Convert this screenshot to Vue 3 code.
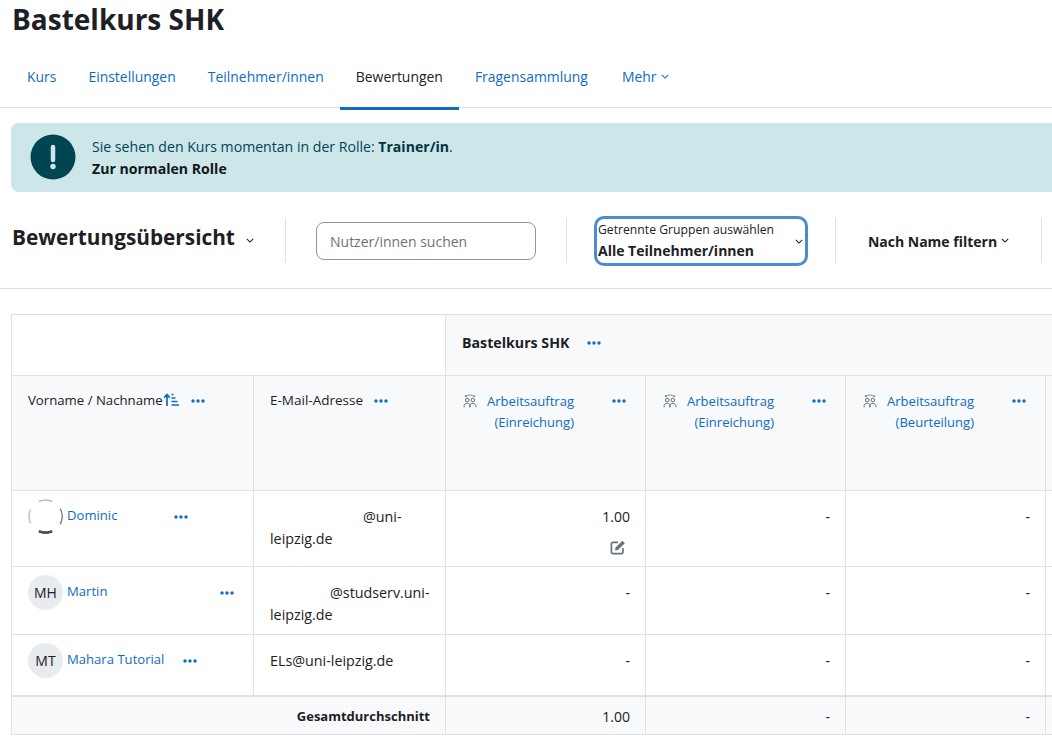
<template>
  <div class="page">
    <h1 class="course-title">Bastelkurs SHK</h1>

    <nav class="tabs">
      <a v-for="tab in tabs" :key="tab" class="tab" :class="{ active: tab === 'Bewertungen' }">{{ tab }}</a>
      <a class="tab more">Mehr <svg class="chev" viewBox="0 0 10 6"><path d="M1 1l4 4 4-4" /></svg></a>
    </nav>

    <div class="alert">
      <svg class="alert-icon" viewBox="0 0 46 46">
        <circle cx="23" cy="23" r="22.5" fill="#004552" />
        <path d="M23 13v13" stroke="#cce6ea" stroke-width="4.5" stroke-linecap="round" />
        <circle cx="23" cy="32.5" r="2.7" fill="#cce6ea" />
      </svg>
      <div class="alert-text">
        <div>Sie sehen den Kurs momentan in der Rolle: <strong>Trainer/in</strong>.</div>
        <a class="alert-link">Zur normalen Rolle</a>
      </div>
    </div>

    <div class="toolbar">
      <div class="tool tool-title">
        <span class="report-title">Bewertungsübersicht</span>
        <svg class="chev dark" viewBox="0 0 10 6"><path d="M1 1l4 4 4-4" /></svg>
      </div>
      <div class="tool tool-search">
        <input class="search" type="text" placeholder="Nutzer/innen suchen" />
      </div>
      <div class="tool tool-group">
        <div class="group-select">
          <div>
            <div class="group-label">Getrennte Gruppen auswählen</div>
            <div class="group-value">Alle Teilnehmer/innen</div>
          </div>
          <svg class="chev dark" viewBox="0 0 10 6"><path d="M1 1l4 4 4-4" /></svg>
        </div>
      </div>
      <div class="tool tool-filter">
        <span class="filter-label">Nach Name filtern</span>
        <svg class="chev dark" viewBox="0 0 10 6"><path d="M1 1l4 4 4-4" /></svg>
      </div>
    </div>

    <table class="grades">
      <colgroup>
        <col style="width: 242px" />
        <col style="width: 192px" />
        <col style="width: 200px" />
        <col style="width: 200px" />
        <col style="width: 200px" />
        <col style="width: 200px" />
      </colgroup>
      <thead>
        <tr class="row-course">
          <th class="blank" colspan="2"></th>
          <th class="course-cell" colspan="4">
            <span>Bastelkurs SHK</span>
            <svg class="dots" viewBox="0 0 14 4"><circle cx="2" cy="2" r="1.7" /><circle cx="7" cy="2" r="1.7" /><circle cx="12" cy="2" r="1.7" /></svg>
          </th>
        </tr>
        <tr class="row-items">
          <th>
            <div class="head-line">
              <span>Vorname / Nachname</span>
              <svg class="sort" viewBox="0 0 16 14">
                <path d="M4 13V2M1.2 4.6L4 1.6l2.8 3" fill="none" stroke="#0f6cbf" stroke-width="1.7" />
                <path d="M8.5 1.5h2M8.5 5h4M8.5 8.5h6M8.5 12h7.5" fill="none" stroke="#0f6cbf" stroke-width="1.5" />
              </svg>
              <svg class="dots first" viewBox="0 0 14 4"><circle cx="2" cy="2" r="1.7" /><circle cx="7" cy="2" r="1.7" /><circle cx="12" cy="2" r="1.7" /></svg>
            </div>
          </th>
          <th>
            <div class="head-line">
              <span class="mail-head">E-Mail-Adresse</span>
              <svg class="dots mail" viewBox="0 0 14 4"><circle cx="2" cy="2" r="1.7" /><circle cx="7" cy="2" r="1.7" /><circle cx="12" cy="2" r="1.7" /></svg>
            </div>
          </th>
          <th v-for="item in items" :key="item.id" class="item-cell">
            <div class="item-head">
              <svg class="group-icon" viewBox="0 0 14 14" fill="none" stroke="#6a737b" stroke-width="1">
                <circle cx="4.2" cy="6" r="1.8" />
                <circle cx="9.8" cy="6" r="1.8" />
                <path d="M1 13.2c0-2.6 1.2-4 3.2-4s3.2 1.4 3.2 4M6.6 13.2c0-2.6 1.2-4 3.2-4s3.2 1.4 3.2 4" />
                <path d="M2.5 2.4C4 .6 10 .6 11.5 2.4M2.3 1l.1 1.6 1.6-.1M11.7 1l-.1 1.6-1.6-.1" stroke-width=".8" />
              </svg>
              <a class="item-link">Arbeitsauftrag<br />{{ item.label }}</a>
              <svg class="dots item" viewBox="0 0 14 4"><circle cx="2" cy="2" r="1.7" /><circle cx="7" cy="2" r="1.7" /><circle cx="12" cy="2" r="1.7" /></svg>
            </div>
          </th>
          <th></th>
        </tr>
      </thead>
      <tbody>
        <tr v-for="user in users" :key="user.name" :style="{ height: user.height + 'px' }">
          <td class="user-cell">
            <div class="user">
              <svg v-if="!user.initials" class="avatar-photo" viewBox="0 0 36 36" fill="none">
                <path d="M11 2.6A17 17 0 0 1 25 2.6" stroke="#b4b7bd" stroke-width="1.5" />
                <path d="M2.6 11A17 17 0 0 0 2.6 25" stroke="#c8cacf" stroke-width="2" />
                <path d="M33.2 10A17 17 0 0 1 33.2 26" stroke="#7f828a" stroke-width="1.6" />
                <path d="M11 33.2A17 17 0 0 0 25 33.2" stroke="#4b4d55" stroke-width="3" />
              </svg>
              <span v-else class="avatar">{{ user.initials }}</span>
              <a class="user-name" :style="{ width: user.nameWidth + 'px' }">{{ user.name }}</a>
              <svg class="dots" viewBox="0 0 14 4"><circle cx="2" cy="2" r="1.7" /><circle cx="7" cy="2" r="1.7" /><circle cx="12" cy="2" r="1.7" /></svg>
            </div>
          </td>
          <td class="mail-cell"><span class="hidden-part" :style="{ width: user.mailGap + 'px' }"></span>{{ user.mail }}</td>
          <td v-for="(grade, i) in user.grades" :key="i" class="grade">
            {{ grade }}
            <div v-if="grade === '1.00'" class="edit-line">
              <svg class="edit" viewBox="0 0 16 16" fill="none">
                <path d="M13 9v4a1.6 1.6 0 0 1-1.6 1.6H3A1.6 1.6 0 0 1 1.4 13V5A1.6 1.6 0 0 1 3 3.4h5" stroke="#6a737b" stroke-width="1.7" />
                <path d="M5.6 8.6L12.4 1.8l2.4 2.4-6.8 6.8-3 .6z" fill="#6a737b" />
              </svg>
            </div>
          </td>
          <td></td>
        </tr>
      </tbody>
      <tfoot>
        <tr class="row-average">
          <td class="average-label" colspan="2">Gesamtdurchschnitt</td>
          <td class="grade">1.00</td>
          <td class="grade">-</td>
          <td class="grade">-</td>
          <td></td>
        </tr>
      </tfoot>
    </table>
  </div>
</template>

<script setup>
const tabs = ['Kurs', 'Einstellungen', 'Teilnehmer/innen', 'Bewertungen', 'Fragensammlung']

const items = [
  { id: 1, label: '(Einreichung)' },
  { id: 2, label: '(Einreichung)' },
  { id: 3, label: '(Beurteilung)' }
]

const users = [
  { name: 'Dominic', initials: '', nameWidth: 107, mail: '@uni-leipzig.de', mailGap: 93, height: 76, grades: ['1.00', '-', '-'] },
  { name: 'Martin', initials: 'MH', nameWidth: 153, mail: '@studserv.uni-leipzig.de', mailGap: 60, height: 68, grades: ['-', '-', '-'] },
  { name: 'Mahara Tutorial', initials: 'MT', nameWidth: 116, mail: 'ELs@uni-leipzig.de', mailGap: 0, height: 61, grades: ['-', '-', '-'] }
]
</script>

<style>
html, body {
  margin: 0;
  overflow: hidden;
  background: #fff;
}
</style>

<style scoped>
.page {
  width: 1052px;
  height: 750px;
  overflow: hidden;
  font-family: "Open Sans", "Noto Sans", sans-serif;
  font-size: 14px;
  color: #1d2125;
}

.course-title {
  margin: 0;
  padding: 1px 0 0 12px;
  height: 43px;
  box-sizing: content-box;
  font-size: 28px;
  line-height: 36px;
  font-weight: 700;
}

.tabs {
  display: flex;
  height: 63px;
  padding-left: 11px;
  border-bottom: 1px solid #dee2e6;
  font-size: 13.95px;
}

.tab {
  display: flex;
  align-items: center;
  gap: 4px;
  padding: 2px 16px 0;
  height: 61px;
  color: #0f6cbf;
  white-space: nowrap;
}

.tab.active {
  color: #1d2125;
  border-bottom: 3px solid #0f6cbf;
  height: 61px;
}

.tab.more {
  margin-left: 2px;
  gap: 5px;
}

.chev {
  width: 8px;
  height: 5px;
  flex: none;
  fill: none;
  stroke: #0f6cbf;
  stroke-width: 1.3;
}

.chev.dark {
  stroke: #1d2125;
}

.alert {
  display: flex;
  align-items: center;
  gap: 16px;
  margin: 15px -40px 0 11px;
  padding-left: 19px;
  height: 69px;
  background: #cce6ea;
  border-radius: 8px 0 0 8px;
  color: #004552;
  font-size: 14.1px;
}

.alert-icon {
  width: 46px;
  height: 46px;
  flex: none;
  margin-bottom: 2px;
}

.alert-text {
  line-height: 22px;
}

.alert-text strong {
  color: #00343f;
}

.alert-link {
  font-weight: 700;
  color: #10181a;
}

.toolbar {
  display: flex;
  align-items: center;
  height: 96px;
  border-bottom: 1px solid #dee2e6;
}

.tool {
  display: flex;
  align-items: center;
  flex: none;
  height: 45px;
  border-right: 1px solid #dee2e6;
  box-sizing: border-box;
}

.tool-title {
  width: 286px;
  padding-left: 12px;
  gap: 11px;
}

.report-title {
  padding-bottom: 6px;
  font-size: 20.8px;
  font-weight: 700;
}

.tool-search {
  width: 281px;
  padding-left: 30px;
}

.search {
  width: 220px;
  height: 38px;
  margin-top: 2px;
  box-sizing: border-box;
  padding: 0 13px;
  border: 1px solid #8f959e;
  border-radius: 8px;
  font: inherit;
  color: #6a737b;
}

.search::placeholder {
  color: #6a737b;
  opacity: 1;
}

.tool-group {
  width: 269px;
  padding-left: 27px;
}

.group-select {
  display: flex;
  align-items: center;
  justify-content: space-between;
  flex: none;
  box-sizing: border-box;
  width: 214px;
  height: 50px;
  margin-top: 2px;
  padding: 0 2px 0 1px;
  border: 3px solid #4a8ccc;
  border-radius: 10px;
}

.group-label {
  font-size: 12.2px;
  line-height: 19px;
}

.group-value {
  font-size: 14px;
  font-weight: 700;
  line-height: 23px;
}

.tool-filter {
  width: 206px;
  justify-content: center;
  gap: 4px;
  font-weight: 700;
}

.filter-label {
  padding-top: 2px;
}

.grades {
  width: 1034px;
  margin: 25px 0 0 11px;
  border-collapse: collapse;
  table-layout: fixed;
}

th, td {
  border: 1px solid #dee2e6;
  box-sizing: border-box;
  font-weight: 400;
  text-align: left;
  vertical-align: top;
}

thead th {
  background: #f8f9fa;
}

.row-course {
  height: 61px;
}

.row-course .blank {
  background: #fff;
}

.course-cell {
  padding: 0 16px 6px;
  vertical-align: middle;
  font-weight: 700;
  font-size: 14.2px;
}

.course-cell .dots {
  margin-left: 18px;
  vertical-align: 3px;
}

.row-items {
  height: 115px;
}

.row-items th {
  padding: 15px 16px;
}

.head-line {
  display: flex;
  align-items: center;
  white-space: nowrap;
  font-size: 13.2px;
}

.mail-head {
  font-size: 13.5px;
}

.dots {
  width: 14px;
  height: 4px;
  flex: none;
  fill: #0f6cbf;
}

.sort {
  width: 16px;
  height: 14px;
  flex: none;
  margin-left: 0;
}

.dots.first {
  margin: 2px 0 0 12px;
}

.dots.mail {
  margin: 2px 0 0 11px;
}

.item-head {
  display: flex;
  align-items: flex-start;
}

.group-icon {
  width: 14px;
  height: 14px;
  flex: none;
  margin: 3px 10px 0 1px;
}

.item-link {
  width: 87px;
  text-align: right;
  color: #0f6cbf;
  font-size: 13.05px;
  line-height: 21px;
  white-space: nowrap;
}

.dots.item {
  margin: 8px 0 0 38px;
}

.user-cell {
  padding: 8px 16px;
}

.user {
  display: flex;
  align-items: center;
  height: 35px;
}

.avatar, .avatar-photo {
  display: flex;
  align-items: center;
  justify-content: center;
  width: 35px;
  height: 35px;
  flex: none;
  margin-right: 4px;
  border-radius: 50%;
  background: #e9ecef;
  color: #1d2125;
  font-size: 14px;
}

.avatar-photo {
  background: #fff;
}

.user-name {
  align-self: flex-start;
  padding-top: 7px;
  flex: none;
  color: #0f6cbf;
  font-size: 13.1px;
  line-height: 18px;
  white-space: nowrap;
}

.mail-cell {
  padding: 15px 12px 0 16px;
  font-size: 14.3px;
  line-height: 22px;
}

.hidden-part {
  display: inline-block;
}

.grade {
  padding: 15px 15px 0 16px;
  text-align: right;
  line-height: 22px;
}

.edit-line {
  display: flex;
  justify-content: flex-end;
  margin-top: 11px;
  padding-right: 4px;
}

.edit {
  width: 16px;
  height: 16px;
}

.row-average {
  height: 39px;
}

.row-average td {
  background: #f8f9fa;
  border-top-width: 2px;
  padding-top: 9px;
}

.row-average .average-label {
  padding-top: 10px;
  padding-right: 15px;
  text-align: right;
  font-size: 13px;
  font-weight: 700;
}
</style>
